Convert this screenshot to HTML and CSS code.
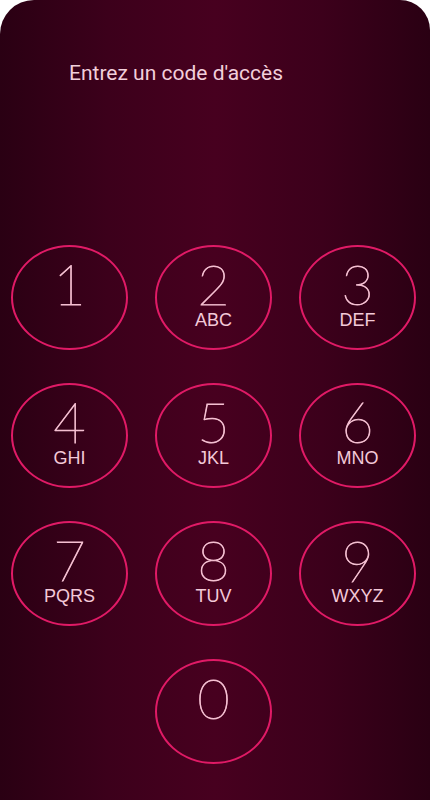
FILE: index.html
```html
<!DOCTYPE html>
<html lang="fr">
<head>
    <meta charset="UTF-8">
    <meta name="viewport" content="width=device-width, initial-scale=1.0">
    <title>Code d'accès</title>
    <link rel="stylesheet" href="styles.css">
</head>
<body>
    <div class="screen">
        <p class="title">Entrez un code d'accès</p>
        <div class="keypad">
            <button class="key"><span class="digit">1</span></button>
            <button class="key"><span class="digit">2</span><span class="letters">ABC</span></button>
            <button class="key"><span class="digit">3</span><span class="letters">DEF</span></button>
            <button class="key"><span class="digit">4</span><span class="letters">GHI</span></button>
            <button class="key"><span class="digit">5</span><span class="letters">JKL</span></button>
            <button class="key"><span class="digit">6</span><span class="letters">MNO</span></button>
            <button class="key"><span class="digit">7</span><span class="letters">PQRS</span></button>
            <button class="key"><span class="digit">8</span><span class="letters">TUV</span></button>
            <button class="key"><span class="digit">9</span><span class="letters">WXYZ</span></button>
            <button class="key key-zero"><span class="digit">0</span></button>
        </div>
    </div>
</body>
</html>
```

FILE: styles.css
```css
body {
    margin: 0;
    background: #fff;
}
.screen {
    height: 800px;
    overflow: hidden;
    background: linear-gradient(to right, #2a0013, #3c001b 25%, #47001f 50%, #3c001b 75%, #2a0013);
    border-radius: 34px 30px 0 0;
}
.title {
    margin: 0;
    padding: 61px 0 0 69px;
    font-family: Roboto, "Liberation Sans", sans-serif;
    font-size: 21px;
    line-height: 25px;
    color: #f2cfdb;
}
.keypad {
    display: grid;
    grid-template-columns: repeat(3, 117px);
    grid-auto-rows: 105px;
    column-gap: 27px;
    row-gap: 33px;
    margin-top: 159px;
    padding-left: 11px;
}
.key {
    display: flex;
    flex-direction: column;
    align-items: center;
    padding: 15px 0 0;
    background: none;
    border: 2px solid #e01a66;
    border-radius: 50%;
    color: #f4bfd1;
}
.key-zero {
    grid-column: 2;
}
.digit {
    font-family: Lato, Roboto, sans-serif;
    font-weight: 100;
    font-size: 56px;
    line-height: 44px;
    -webkit-text-stroke: 0.8px #f4bfd1;
}
.letters {
    font-family: "Liberation Sans", Arial, sans-serif;
    font-size: 18px;
    line-height: 18px;
    margin-top: 5px;
    color: #f3c9d8;
}
```
